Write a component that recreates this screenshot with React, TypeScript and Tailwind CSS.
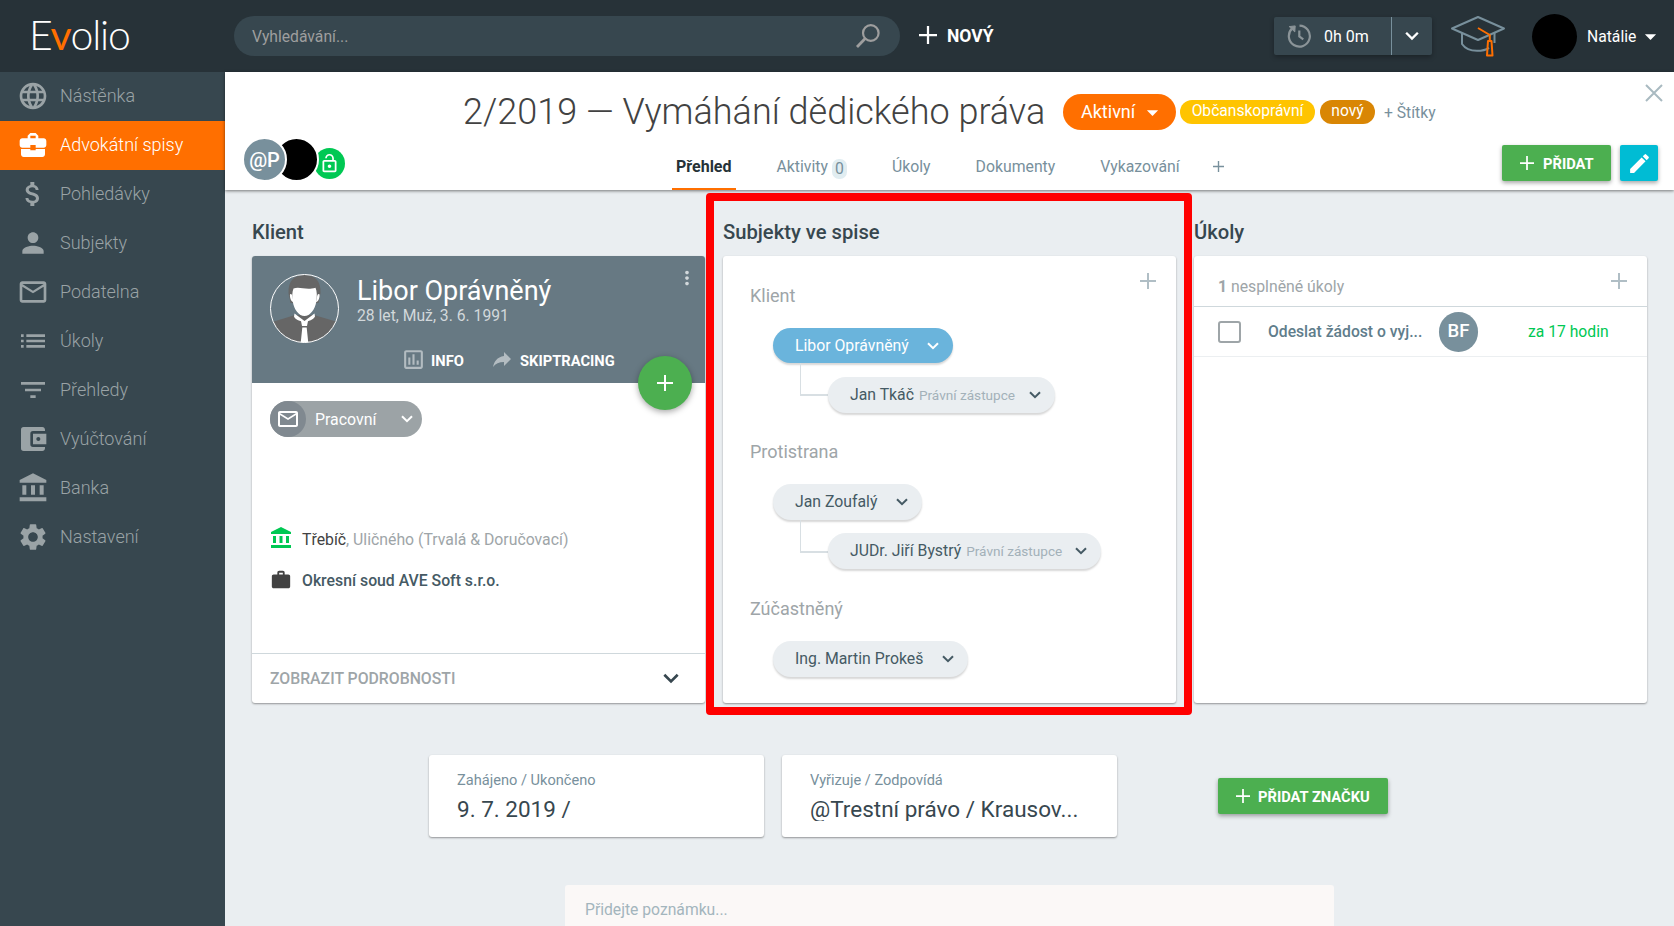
import type { ReactNode } from 'react';
import clsx from 'clsx';
import {
  MdAccountBalance,
  MdAccountBalanceWallet,
  MdArrowDropDown,
  MdAttachMoney,
  MdBusinessCenter,
  MdEdit,
  MdFilterList,
  MdLanguage,
  MdList,
  MdLockOpen,
  MdMailOutline,
  MdMoreVert,
  MdOutlineInsertChart,
  MdPerson,
  MdReply,
  MdSettings,
  MdWork,
} from 'react-icons/md';

const NAV_ITEMS = [
  { label: 'Nástěnka', icon: MdLanguage },
  { label: 'Advokátní spisy', icon: MdBusinessCenter, active: true },
  { label: 'Pohledávky', icon: MdAttachMoney },
  { label: 'Subjekty', icon: MdPerson },
  { label: 'Podatelna', icon: MdMailOutline },
  { label: 'Úkoly', icon: MdList },
  { label: 'Přehledy', icon: MdFilterList },
  { label: 'Vyúčtování', icon: MdAccountBalanceWallet },
  { label: 'Banka', icon: MdAccountBalance },
  { label: 'Nastavení', icon: MdSettings },
];

const SUBJECT_GROUPS = [
  {
    title: 'Klient',
    name: 'Libor Oprávněný',
    size: 'w-[180px] h-[35px]',
    primary: true,
    offset: 'pt-[14px]',
    child: { name: 'Jan Tkáč', role: 'Právní zástupce', size: 'w-[227px] h-9' },
  },
  {
    title: 'Protistrana',
    name: 'Jan Zoufalý',
    size: 'w-[149px] h-9',
    offset: 'pt-[13px] pb-px',
    child: { name: 'JUDr. Jiří Bystrý', role: 'Právní zástupce', size: 'w-[273px] h-9' },
  },
  { title: 'Zúčastněný', name: 'Ing. Martin Prokeš', size: 'w-[195px] h-9' },
];

const CARD = 'bg-white rounded-[3px] shadow-[0_1px_2px_rgba(0,0,0,0.38)]';

function Chevron({ className }: { className?: string }) {
  return (
    <svg viewBox="0 0 12 8" className={clsx('shrink-0', className)} fill="none" stroke="currentColor" strokeWidth="2">
      <path d="M1 1.2l5 5 5-5" />
    </svg>
  );
}

function Plus({ className }: { className?: string }) {
  return (
    <svg viewBox="0 0 16 16" className={clsx('shrink-0', className)} fill="none" stroke="currentColor" strokeWidth="2">
      <path d="M8 0v16M0 8h16" />
    </svg>
  );
}

function SearchIcon() {
  return (
    <svg viewBox="0 0 24 24" className="w-6 h-6" fill="none" stroke="#9e9e9e" strokeWidth="2.2">
      <circle cx="14.8" cy="9" r="7.8" />
      <path d="M9.2 14.6L1 23" strokeWidth="2.8" />
    </svg>
  );
}

function TimerIcon() {
  return (
    <svg viewBox="0 0 24 24" className="w-6 h-6" fill="none" stroke="#8b9498" strokeWidth="2.2">
      <path d="M12.5 1.6a10.5 10.5 0 1 1-7.3 2.8" />
      <path d="M12.3 6.5v6l4 2.8" />
      <path d="M2.2 2.6l6-.7-.4 6z" fill="#8b9498" strokeWidth="1" />
    </svg>
  );
}

function GraduationCap() {
  return (
    <svg viewBox="0 0 56 42" className="w-14 h-[42px]" fill="none" stroke="#78909c" strokeWidth="2" strokeLinejoin="round">
      <path d="M28 2L2 13.5l26 11.500 26-11.500z" />
      <path d="M12 18v11c3 4.500 9 6.800 15 6.800s9-1 12-3M44.500 18v10" />
      <path d="M28 13l11.800 7v6M38 26h3.500l1 14.500h-5.500z" stroke="#ff6f00" />
    </svg>
  );
}

function PersonAvatar() {
  return (
    <svg viewBox="0 0 69 69" className="w-[69px] h-[69px] shrink-0">
      <defs>
        <clipPath id="avatar-clip"><circle cx="34.5" cy="34.5" r="34" /></clipPath>
      </defs>
      <g clipPath="url(#avatar-clip)">
        <path d="M4 47.500L25 41h19l22 6.500V69H4z" fill="#666" />
        <path d="M24.500 39.500L34.500 47l10-7.500.5 3c-2 3.500-6 5-10.500 5s-9-1.500-10.500-5z" fill="#fff" />
        <path d="M18.500 19C18 7 24 1 34.500 1S51 7 50.500 19l-2 10h-28z" fill="#666" />
        <path d="M20 20.500c1-1 2 0 2.300 1.500L23.500 28c-2 .3-4-4-3.500-7.500zM49.500 20.500c-1-1-2 0-2.300 1.500L46 28c2 .3 4-4 3.500-7.500z" fill="#fff" />
        <path d="M23.500 14.500c6-2.500 12 2 22-.8 1.500 3.500 1.700 8 .8 14C45 35.500 40 42 34.500 42S24 35.500 22.800 27.700c-.8-5-.7-10 .7-13.200z" fill="#fff" />
        <path d="M31 47h7l-1 5h-5zM32.300 53.500h4.400l1.600 15.500h-7.600z" fill="#fff" />
      </g>
      <circle cx="34.5" cy="34.5" r="34" fill="none" stroke="#fff" strokeWidth="1" />
    </svg>
  );
}

function TopBar() {
  return (
    <header className="flex items-center h-[72px] shrink-0 bg-[#273238] text-white">
      <div className="w-[234px] shrink-0 pl-[29px] pb-1 font-[Lato] font-light text-[41px] leading-none tracking-[-1.2px]">
        E<span className="text-[#ff6f00] font-normal -ml-px">v</span>olio
      </div>
      <div className="flex items-center justify-between w-[666px] h-10 pl-[18px] pr-[20px] rounded-full bg-[#37474f]">
        <span className="pt-px text-[15.7px] text-[#9e9e9e]">Vyhledávání...</span>
        <SearchIcon />
      </div>
      <button className="flex items-center ml-[19px] gap-[10px] font-bold text-[17.5px]">
        <Plus className="w-[18px] h-[18px] mt-[-2px]" />
        NOVÝ
      </button>
      <div className="flex items-center ml-auto w-[158px] h-[38px] rounded-[2px] bg-[#37474f] shadow-[0_2px_5px_rgba(0,0,0,0.3)]">
        <div className="flex items-center w-[118px] h-full pl-[13px] gap-[13px] border-r border-[#78909c] text-[16px]">
          <TimerIcon />
          <span className="pt-0.5">0h 0m</span>
        </div>
        <Chevron className="w-3.5 h-[10px] ml-[13px]" />
      </div>
      <div className="ml-[18px]"><GraduationCap /></div>
      <div className="w-[45px] h-[45px] ml-[26px] rounded-full bg-black" />
      <span className="ml-[10px] w-[50px] pt-px text-[15.7px]">Natálie</span>
      <MdArrowDropDown className="w-[27px] h-[27px] mr-[10px]" />
    </header>
  );
}

function Sidebar() {
  return (
    <nav className="w-[225px] shrink-0 bg-[#37474f]">
      {NAV_ITEMS.map(item => (
        <a
          key={item.label}
          className={clsx(
            'flex items-center h-[49px] pl-[17px] gap-[11px] text-[18px] font-light',
            item.active ? 'bg-[#ff6f00] text-white' : 'text-[#9aa3a6]'
          )}
        >
          <item.icon className="w-8 h-8 mt-[-2px]" />
          <span className="pb-0.5">{item.label}</span>
        </a>
      ))}
    </nav>
  );
}

function Tab({ children, active }: { children: ReactNode; active?: boolean }) {
  return (
    <a
      className={clsx(
        'flex items-center gap-1 h-full px-1 pt-2 border-b-2',
        active ? 'border-[#ff6f00] text-[#263238] text-[16px] font-bold' : 'border-transparent text-[#78909c] text-[15.8px]'
      )}
    >
      {children}
    </a>
  );
}

function CaseHeader() {
  return (
    <div className="relative z-10 h-[118px] shrink-0 bg-white shadow-[0_1px_3px_rgba(0,0,0,0.5)]">
      <div className="flex items-center h-[65px] pt-[15px] pl-[238px]">
        <h1 className="w-[600px] pb-px text-[36px] font-light leading-none text-[#424242] whitespace-nowrap">
          2/2019 — Vymáhání dědického práva
        </h1>
        <button className="flex items-center w-[113px] h-9 pl-[18px] pb-0.5 rounded-full bg-[#ff6f00] text-white text-[18px]">
          Aktivní
          <MdArrowDropDown className="w-[27px] h-[27px] ml-1 mt-0.5" />
        </button>
        <span className="flex items-center justify-center w-[135px] h-6 ml-1 rounded-full bg-[#ffc400] text-white text-[15.6px]">Občanskoprávní</span>
        <span className="flex items-center justify-center w-[55px] h-6 ml-[5px] rounded-full bg-[#d98604] text-white text-[15.6px]">nový</span>
        <span className="ml-[9px] pt-0.5 text-[15.7px] text-[#78909c]">+ Štítky</span>
        <svg viewBox="0 0 18 18" className="w-[18px] h-[18px] ml-auto mr-[11px] -mt-[39px]" stroke="#a9bac1" strokeWidth="2">
          <path d="M1 1l16 16M17 1L1 17" />
        </svg>
      </div>
      <div className="flex h-[53px]">
        <div className="flex items-start w-[447px] pl-[17px]">
          <div className="relative z-20 flex items-center justify-center w-[45px] h-[45px] rounded-full border-2 border-white bg-[#78909c] text-white text-[20px] font-medium">
            @P
          </div>
          <div className="relative z-10 w-[45px] h-[45px] -ml-[13px] rounded-full border-2 border-white bg-black" />
          <div className="flex items-center justify-center w-[31px] h-[31px] mt-[11px] -ml-[5px] rounded-full bg-[#00c853] text-white">
            <MdLockOpen className="w-[21px] h-[21px]" />
          </div>
        </div>
        <div className="flex gap-[37px]">
          <Tab active>Přehled</Tab>
          <Tab>
            Aktivity
            <span className="w-[15px] h-5 mt-1 rounded-[7px] bg-[#e1edf1] text-center leading-5">0</span>
          </Tab>
          <Tab>Úkoly</Tab>
          <Tab>Dokumenty</Tab>
          <Tab>Vykazování</Tab>
        </div>
        <Plus className="w-[11px] h-[11px] mt-6 ml-[29px] text-[#78909c]" />
        <button className="flex items-center w-[109px] h-9 mt-2 ml-auto pl-[18px] gap-[9px] rounded-[2px] bg-[#4caf50] text-white font-bold text-[14.7px] shadow-[0_2px_4px_rgba(0,0,0,0.35)]">
          <Plus className="w-3.5 h-3.5" />
          <span className="pt-0.5">PŘIDAT</span>
        </button>
        <button className="flex items-center justify-center w-[38px] h-9 mt-2 ml-[9px] mr-4 rounded-[2px] bg-[#00bcd4] text-white shadow-[0_2px_4px_rgba(0,0,0,0.35)]">
          <MdEdit className="w-[25px] h-[25px]" />
        </button>
      </div>
    </div>
  );
}

function Panel({ title, children }: { title: string; children: ReactNode }) {
  return (
    <section className="w-[453px]">
      <h2 className="mb-[10px] text-[20.2px] leading-7 font-medium text-[#37474f]">{title}</h2>
      <div className={clsx(CARD, 'flex flex-col h-[447px]')}>{children}</div>
    </section>
  );
}

function ClientPanel() {
  return (
    <Panel title="Klient">
      <div className="relative h-[127px] rounded-t-[3px] bg-[#677983] text-white">
        <div className="flex pt-[18px] pl-[18px]">
          <PersonAvatar />
          <div className="pl-[18px]">
            <p className="text-[27px] leading-[34px]">Libor Oprávněný</p>
            <p className="text-[15.7px] leading-[15px] text-[#d2d8db]">28 let, Muž, 3. 6. 1991</p>
          </div>
          <MdMoreVert className="w-[22px] h-[22px] mt-[-7px] ml-auto mr-[7px] text-[#d2d8db]" />
        </div>
        <div className="flex items-center h-6 mt-[6px] pl-[149px] text-[14.7px] font-bold">
          <MdOutlineInsertChart className="w-[25px] h-[25px] mt-[-4px] text-[#b3bcc1]" />
          <span className="w-[64px] pl-[5px]">INFO</span>
          <MdReply className="w-6 h-6 mt-[-4px] -scale-x-100 text-[#b3bcc1]" />
          <span className="pl-[6px]">SKIPTRACING</span>
        </div>
        <button className="absolute right-[13px] -bottom-[27px] flex items-center justify-center w-[54px] h-[54px] rounded-full bg-[#4caf50] shadow-[0_2px_6px_rgba(0,0,0,0.35)]">
          <Plus className="w-4 h-4" />
        </button>
      </div>
      <button className="flex items-center w-[152px] h-9 mt-[18px] ml-[18px] shrink-0 rounded-full bg-[#9ca3a6] text-white text-[15.9px]">
        <span className="flex items-center justify-center w-9 h-9 rounded-full bg-[#808990]">
          <MdMailOutline className="w-6 h-6" />
        </span>
        <span className="w-[86px] pl-[9px] pt-0.5 text-left">Pracovní</span>
        <Chevron className="w-3 h-2 ml-[9px]" />
      </button>
      <div className="flex flex-col gap-[17px] mt-[91px] pl-5 text-[15.8px] leading-6">
        <div className="flex items-center">
          <MdAccountBalance className="w-6 h-6 -ml-[3px] mr-[9px] mt-[-4px] text-[#00c853]" />
          <p className="text-[#9ea5a8]">
            <span className="text-[#424242]">Třebíč</span>, Uličného (Trvalá &amp; Doručovací)
          </p>
        </div>
        <div className="flex items-center text-[#424242]">
          <MdWork className="w-[22px] h-[22px] -ml-[2px] mr-[10px] mt-[-3px]" />
          <p className="font-medium text-[#455a64]">Okresní soud AVE Soft s.r.o.</p>
        </div>
      </div>
      <div className="flex items-center justify-between h-[50px] mt-auto pl-[18px] pr-[26px] border-t border-[#cfd8dc] text-[15.8px] font-medium text-[#9ea5a8]">
        ZOBRAZIT PODROBNOSTI
        <Chevron className="w-4 h-[11px] text-[#37474f]" />
      </div>
    </Panel>
  );
}

function SubjectPill({ name, role, size, primary }: { name: string; role?: string; size: string; primary?: boolean }) {
  return (
    <button
      className={clsx(
        'flex items-center justify-between pl-[22px] pr-[14px] rounded-full text-[15.8px] whitespace-nowrap shadow-[0_2px_2px_rgba(0,0,0,0.16)]',
        size,
        primary ? 'bg-[#6ab4dc] text-white' : 'bg-[#eaeef1] text-[#455a64]'
      )}
    >
      <span>
        {name}
        {role && <span className="pl-[5px] text-[13.6px] text-[#a3b1b9]">{role}</span>}
      </span>
      <Chevron className="w-3 h-2" />
    </button>
  );
}

function SubjectsPanel() {
  return (
    <Panel title="Subjekty ve spise">
      <div className="flex justify-end pt-[17px] pr-5 text-[#b0bec5]">
        <Plus className="w-4 h-4" />
      </div>
      <div className="flex flex-col gap-[27px] mt-[-5px] pl-[27px]">
        {SUBJECT_GROUPS.map(group => (
          <div key={group.title}>
            <h3 className="text-[18px] leading-6 text-[#9ea5a8]">{group.title}</h3>
            <div className="mt-5 ml-[23px]">
              <SubjectPill name={group.name} size={group.size} primary={group.primary} />
              {group.child && (
                <div className="flex pl-[27px]">
                  <div className="w-7 h-[33px] border-l border-b-2 border-[#d8dfe3]" />
                  <div className={group.offset}>
                    <SubjectPill {...group.child} />
                  </div>
                </div>
              )}
            </div>
          </div>
        ))}
      </div>
    </Panel>
  );
}

function TasksPanel() {
  return (
    <Panel title="Úkoly">
      <div className="flex justify-between h-[51px] pt-[17px] pl-6 pr-5 border-b border-[#cfd8dc] text-[15.8px] text-[#9ea5a8]">
        <p className="pt-[2px]"><b>1</b> nesplněné úkoly</p>
        <Plus className="w-4 h-4 text-[#b0bec5]" />
      </div>
      <div className="flex items-center h-[50px] pl-6 border-b border-[#eceff1] text-[15.7px] whitespace-nowrap">
        <span className="w-[23px] h-[22px] shrink-0 border-2 border-[#9ea5a8] rounded-[3px]" />
        <span className="w-[198px] shrink-0 pl-[27px] font-medium text-[#607d8b]">Odeslat žádost o vyj...</span>
        <span className="flex items-center justify-center w-[39px] h-10 rounded-full bg-[#78909c] text-white text-[18.5px] font-medium">BF</span>
        <span className="pl-[50px] text-[#00c853]">za 17 hodin</span>
      </div>
    </Panel>
  );
}

function InfoCard({ label, value }: { label: string; value: string }) {
  return (
    <div className={clsx(CARD, 'w-[335px] h-[82px] px-7 pt-[15px]')}>
      <p className="text-[14.6px] leading-5 text-[#78909c]">{label}</p>
      <p className="mt-[7px] overflow-hidden whitespace-nowrap text-[22.5px] leading-6 text-[#37474f]">{value}</p>
    </div>
  );
}

export default function App() {
  return (
    <div className="flex flex-col w-[1674px] h-[926px] overflow-hidden font-[Roboto,sans-serif] bg-[#eaeef1]">
      <TopBar />
      <div className="flex flex-1 min-h-0">
        <Sidebar />
        <main className="relative flex flex-col flex-1 min-w-0">
          <CaseHeader />
          <div className="flex gap-[18px] pt-[28px] pl-[27px]">
            <ClientPanel />
            <SubjectsPanel />
            <TasksPanel />
          </div>
          <div className="flex gap-[18px] mt-[52px] pl-[204px]">
            <InfoCard label="Zahájeno / Ukončeno" value="9. 7. 2019 /" />
            <InfoCard label="Vyřizuje / Zodpovídá" value="@Trestní právo / Krausov..." />
            <button className="flex items-center w-[170px] h-9 mt-[23px] ml-[83px] pl-[18px] gap-2 rounded-[2px] bg-[#4caf50] text-white font-bold text-[14.7px] shadow-[0_2px_4px_rgba(0,0,0,0.35)]">
              <Plus className="w-3.5 h-3.5" />
              <span className="pt-0.5">PŘIDAT ZNAČKU</span>
            </button>
          </div>
          <div className="w-[769px] h-[60px] mt-12 ml-[340px] pl-5 pt-[13px] shrink-0 rounded-[3px] bg-[#fbf8f7] text-[15.7px] text-[#a3b5bd]">
            Přidejte poznámku...
          </div>
          {/* highlighted area */}
          <div className="absolute z-20 left-[481px] top-[121px] w-[486px] h-[522px] border-8 border-[#ff0000] rounded-[4px] pointer-events-none" />
        </main>
      </div>
    </div>
  );
}
